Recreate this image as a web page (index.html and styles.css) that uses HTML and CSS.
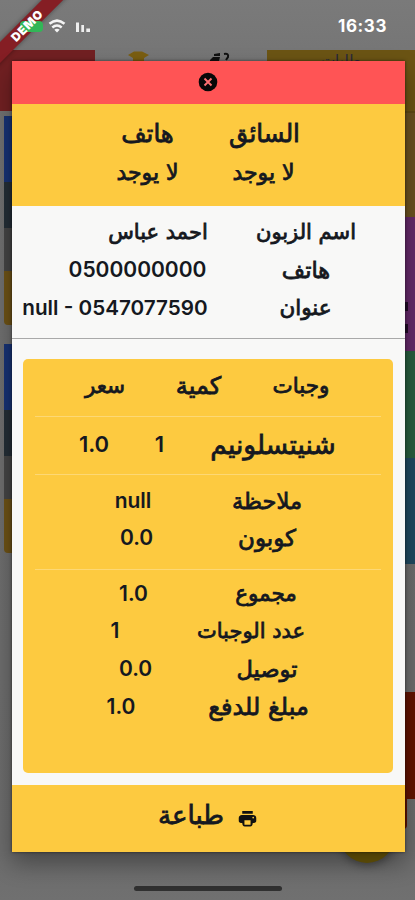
FILE: index.html
```
<!DOCTYPE html>
<html lang="ar">
<head>
<meta charset="utf-8">
<title>طباعة</title>
<link rel="stylesheet" href="styles.css">
</head>
<body>
<div class="screen">
  <div class="page">
    <header class="status">
      <svg class="signals" width="60" height="24" viewBox="0 0 60 24">
        <g fill="none" stroke="#f4f4f4" stroke-width="2.500"><path d="M31.500 9.800q7.500-6.400 15 0M34.300 13.500q4.700-4 9.400 0"/></g>
        <path d="M36.300 15.800q2.700-2 5.400 0L39 18.500z" fill="#f4f4f4"/>
      </svg>
      <svg class="bars" width="16" height="14" viewBox="0 0 16 14"><path d="M1 1.500h3v9.500H1zM6.300 4h2.700v7H6.300zM11.300 7.500h3.700v3.500h-3.700z" fill="#eee"/></svg>
      <time class="clock">16:33</time>
    </header>
    <div class="tabs">
      <div class="tab tab-red"></div>
      <svg class="cap" width="22" height="12" viewBox="0 0 22 12"><path d="M0 5L6 1.500h8L21 5l-5 3v3H5V8z" fill="#7a5e11"/></svg>
      <svg class="rider" width="22" height="12" viewBox="0 0 22 12"><path d="M5 2l6-1v3H5zM1 8l3-3h7l-1 4H1z" fill="#111"/><path d="M15 2q5-1 4 3l-2 3" fill="none" stroke="#111" stroke-width="2"/></svg>
      <div class="tab tab-amber"><span>طلبات</span></div>
    </div>
    <div class="columns">
      <div class="edge-left">
        <div class="order"><i class="blue"></i><i class="slate"></i><i class="gray"></i><i class="amber"></i></div>
        <div class="order"><i class="blue"></i><i class="slate"></i><i class="gray"></i><i class="amber"></i></div>
      </div>
      <div class="edge-right"><i class="r-amber"></i><i class="r-purple"><b></b><b></b></i><i class="r-green"></i><i class="r-blue"></i><i class="r-space"></i><i class="r-red"></i><i class="r-tail"></i></div>
    </div>
  </div>
  <div class="fab"></div>
  <div class="ribbon"></div>
  <div class="battery"></div>
  <div class="ribbon ribbon-label">DEMO</div>
  <div class="home-bar"></div>

  <main class="dialog">
    <div class="close-row">
      <svg width="20" height="20" viewBox="0 0 20 20"><circle cx="10" cy="10" r="9.300" fill="#080808"/><path d="M6.500 6.500l7 7M13.500 6.500l-7 7" stroke="#ff7072" stroke-width="1.900"/></svg>
    </div>
    <section class="driver">
      <div class="row r1"><span class="ar">هاتف</span><span class="ar">السائق</span></div>
      <div class="row r2"><span class="ar">لا يوجد</span><span class="ar">لا يوجد</span></div>
    </section>
    <section class="customer">
      <div class="row c1"><span class="ar">احمد عباس</span><span class="ar">اسم الزبون</span></div>
      <div class="row c2"><span class="num">0500000000</span><span class="ar">هاتف</span></div>
      <div class="row c3"><span class="num">null - 0547077590</span><span class="ar">عنوان</span></div>
    </section>
    <section class="receipt">
      <div class="card">
        <div class="row t1"><span class="ar">سعر</span><span class="ar">كمية</span><span class="ar">وجبات</span></div>
        <hr>
        <div class="row t2"><span class="num">1.0</span><span class="num">1</span><span class="ar">شنيتسلونيم</span></div>
        <hr>
        <div class="row t3"><span class="num">null</span><span class="ar">ملاحظة</span></div>
        <div class="row t4"><span class="num">0.0</span><span class="ar">كوبون</span></div>
        <hr>
        <div class="row t5"><span class="num">1.0</span><span class="ar">مجموع</span></div>
        <div class="row t6"><span class="num">1</span><span class="ar">عدد الوجبات</span></div>
        <div class="row t7"><span class="num">0.0</span><span class="ar">توصيل</span></div>
        <div class="row t8"><span class="num">1.0</span><span class="ar">مبلغ للدفع</span></div>
      </div>
    </section>
    <footer class="row print"><span class="ar">طباعة</span>
      <svg width="21" height="21" viewBox="0 0 24 24"><path d="M18.500 8h-13C3.500 8 2 9.500 2 11.500v3C2 16 3 17 4.500 17H6c0 2 1 4 3 4h6c2 0 3-2 3-4h1.500c1.500 0 2.500-1 2.500-2.500v-3C22 9.500 20.500 8 18.500 8zM15.500 19h-7v-5h7v5zm3-7c-.550 0-1-.450-1-1s.450-1 1-1 1 .450 1 1-.450 1-1 1zM18 3.500H6V6.500h12V3.500z" fill="#111"/></svg>
    </footer>
  </main>
</div>
</body>
</html>
```
FILE: styles.css
```
* { box-sizing: border-box; }
body { margin: 0; }
.screen { position: relative; width: 415px; height: 900px; overflow: hidden; background: linear-gradient(#7a7a7a 0, #707070 120px, #6c6c6c 850px, #707070); }

.status { height: 50px; display: flex; padding: 14px 28px 0 18px; }
.bars { margin-top: 7px; margin-left: -3px; }
.clock { margin-left: auto; margin-top: 2px; font: 700 17px/20px Inter, sans-serif; letter-spacing: .6px; color: #fff; }
.tabs { display: flex; height: 61px; }
.tab-red { width: 95px; background: #712022; }
.cap { margin-left: 33px; }
.rider { margin: 2px 0 0 59px; }
.tab-amber { width: 148px; margin-left: auto; background: #6b5414; text-align: center; font: 15px/20px "DejaVu Sans", sans-serif; color: #29283c; }
.columns { display: flex; justify-content: space-between; }
.edge-left { width: 12px; padding: 5px 0 0 4px; }
.order { margin-bottom: 19px; }
i, b { display: block; }
.blue { height: 66px; background: #173274; }
.slate { height: 46px; background: #242e36; }
.gray { height: 43px; background: #454545; }
.amber { height: 54px; background: #6d5216; border-radius: 0 0 0 4px; }
.edge-right { width: 12px; }
.r-amber { height: 106px; background: #6b5120; border-top: 2px solid #5e4814; }
.r-purple { height: 134px; background: #65296a; padding-top: 85px; }
.r-purple b { width: 3px; height: 9px; margin: 0 0 13px 2px; background: #210b27; }
.r-green { height: 107px; background: #285d3e; }
.r-blue { height: 106px; background: #204960; }
.r-space { height: 128px; }
.r-red { height: 107px; background: #621300; }
.r-tail { height: 30px; width: 4px; background: #621300; border-radius: 0 0 4px 0; }

.fab { position: absolute; left: 339px; top: 807px; width: 56px; height: 56px; border-radius: 50%; background: #6b5808; box-shadow: 0 3px 8px #0005; }
.home-bar { position: absolute; left: 134px; top: 886px; width: 148px; height: 5px; border-radius: 3px; background: #303030; }
.ribbon { position: absolute; left: -35px; top: 18px; width: 124px; height: 15px; background: #851e24; transform: rotate(-45deg); box-shadow: 0 0 5px #0006; }
.ribbon-label { background: none; box-shadow: none; color: #fff; font: 900 12px/15px Inter, sans-serif; letter-spacing: .6px; text-align: center; }
.battery { position: absolute; left: 20px; top: 21px; width: 23px; height: 11px; border-radius: 4px; background: #32b657; }

.dialog { position: absolute; left: 11.500px; top: 60.500px; width: 393px; height: 791px; display: flex; flex-direction: column; background: #f8f8f7; color: #151820; box-shadow: 0 12px 22px #0005, 0 0 3px #0008; }
.close-row { height: 43.500px; background: #ff5455; display: flex; justify-content: center; align-items: center; }
.driver { height: 102px; background: #fdca40; padding-top: 11px; }
.customer { height: 133px; padding-top: 7px; border-bottom: 1px solid #a9a9a9; }
.receipt { flex: 1; padding: 20px 11.500px 11px; }
.card { height: 414px; border-radius: 5px; background: #fdca40; padding-top: 8px; }
hr { height: 1px; border: 0; margin: 0 12px; background: #fdd875; }
.row { display: flex; height: 38px; line-height: 38px; white-space: nowrap; }
.row span { display: flex; justify-content: center; flex: none; }
.ar { font-family: "DejaVu Sans", sans-serif; font-size: 21.500px; direction: rtl; -webkit-text-stroke: .8px #151820; }
.num { font-family: Inter, sans-serif; font-weight: 600; font-size: 21px; }

.r1 { padding-left: 109px; gap: 55px; }
.r1 .ar { font-size: 24.500px; }
.r1 span:first-child { width: 54px; }
.r1 span:last-child { width: 70px; }
.r2 { padding-left: 105px; gap: 54px; }
.r2 .ar { font-size: 22px; line-height: 40px; }
.r2 span { width: 62px; }
.c1 { padding-left: 97px; gap: 48px; }
.c1 .ar { font-size: 21px; }
.c1 span:first-child { width: 99px; }
.c1 span:last-child { width: 101px; }
.c2 { padding-left: 56px; gap: 74px; }
.c2 .ar { font-size: 22.500px; }
.c2 span:first-child { width: 140px; }
.c2 span:last-child { width: 49px; }
.c3 { padding-left: 11px; gap: 73px; }
.c3 .num { font-size: 20.700px; }
.c3 span:first-child { width: 185px; }
.c3 span:last-child { width: 50px; }
.t1 { height: 49px; padding-left: 63px; gap: 51px; }
.t1 span:nth-child(1) { width: 38px; }
.t1 span:nth-child(2) { width: 47px; font-size: 24px; }
.t1 span:nth-child(3) { width: 56px; }
.t2 { height: 57px; line-height: 55px; padding-left: 55px; gap: 45px; }
.t2 .num { font-size: 22px; }
.t2 .ar { font-size: 26.500px; }
.t2 span:nth-child(1) { width: 32px; }
.t2 span:nth-child(2) { width: 9px; }
.t2 span:nth-child(3) { width: 128px; }
.t3 { margin-top: 7px; padding-left: 91px; gap: 80px; }
.t3 .ar { font-size: 22.500px; }
.t3 span:first-child { width: 38px; }
.t3 span:last-child { width: 70px; }
.t4 { height: 49px; line-height: 36px; padding-left: 97px; gap: 85px; }
.t4 .ar { font-size: 23px; }
.t4 span:first-child { width: 33px; }
.t4 span:last-child { width: 58px; }
.t5 { height: 37px; margin-top: 5px; padding-left: 96px; gap: 87px; }
.t5 span:first-child { width: 29px; }
.t5 span:last-child { width: 62px; }
.t6 { padding-left: 88px; gap: 78px; }
.t6 .ar { font-size: 21px; }
.t6 span:first-child { width: 8px; }
.t6 span:last-child { width: 108px; }
.t7 { height: 37.500px; padding-left: 96px; gap: 85px; }
.t7 .ar { font-size: 22.500px; }
.t7 span:first-child { width: 33px; }
.t7 span:last-child { width: 60px; }
.t8 { padding-left: 84px; gap: 73px; }
.t8 .ar { font-size: 24px; }
.t8 span:first-child { width: 28px; }
.t8 span:last-child { width: 101px; }
.print { height: 67px; line-height: 60px; padding-left: 147px; gap: 13px; background: #fdca40; }
.print .ar { font-size: 26px; }
.print span { width: 65px; }
.print svg { margin-top: 23px; }
```
